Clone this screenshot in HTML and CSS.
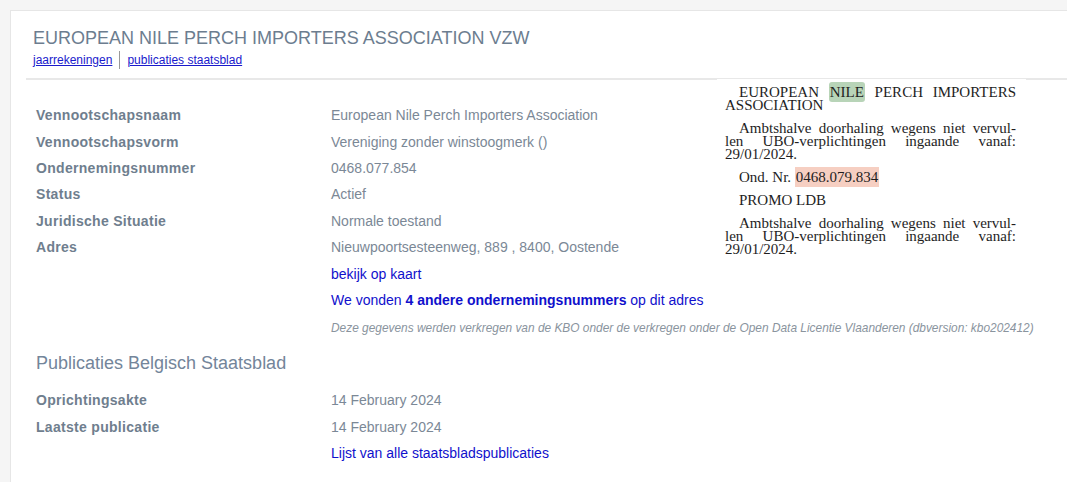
FILE: index.html
```html
<!DOCTYPE html>
<html lang="nl">
<head>
  <meta charset="UTF-8" />
  <meta name="viewport" content="width=device-width, initial-scale=1.0"/>
  <title>European Nile Perch Importers Association VZW</title>
  <link rel="stylesheet" href="styles.css">
</head>
<body>

  <div class="card">
    <div class="card-header">
      <h1>EUROPEAN NILE PERCH IMPORTERS ASSOCIATION VZW</h1>
      <div class="sublinks">
        <a href="#">jaarrekeningen</a>
        <span class="sep"></span>
        <a href="#">publicaties staatsblad</a>
      </div>
    </div>

    <div class="card-body">
      <table class="info">
        <tr><th>Vennootschapsnaam</th><td>European Nile Perch Importers Association</td></tr>
        <tr><th>Vennootschapsvorm</th><td>Vereniging zonder winstoogmerk ()</td></tr>
        <tr><th>Ondernemingsnummer</th><td>0468.077.854</td></tr>
        <tr><th>Status</th><td>Actief</td></tr>
        <tr><th>Juridische Situatie</th><td>Normale toestand</td></tr>
        <tr><th>Adres</th><td>Nieuwpoortsesteenweg, 889 , 8400, Oostende</td></tr>
        <tr><th></th><td><a class="link" href="#">bekijk op kaart</a></td></tr>
        <tr><th></th><td><a class="link" href="#">We vonden <b>4 andere ondernemingsnummers</b> op dit adres</a></td></tr>
        <tr><th></th><td class="note">Deze gegevens werden verkregen van de KBO onder de verkregen onder de Open Data Licentie Vlaanderen (dbversion: kbo202412)</td></tr>
      </table>

      <h2>Publicaties Belgisch Staatsblad</h2>
      <table class="info">
        <tr><th>Oprichtingsakte</th><td>14 February 2024</td></tr>
        <tr><th>Laatste publicatie</th><td>14 February 2024</td></tr>
        <tr><th></th><td><a class="link" href="#">Lijst van alle staatsbladspublicaties</a></td></tr>
      </table>
    </div>

    <div class="clipping">
      <p>EUROPEAN <mark class="hl-name">NILE</mark> PERCH IMPORTERS ASSOCIATION</p>
      <p>Ambtshalve doorhaling wegens niet vervul-len UBO-verplichtingen ingaande vanaf: 29/01/2024.</p>
      <p>Ond. Nr. <mark class="hl-nr">0468.079.834</mark></p>
      <p>PROMO LDB</p>
      <p>Ambtshalve doorhaling wegens niet vervul-len UBO-verplichtingen ingaande vanaf: 29/01/2024.</p>
    </div>
  </div>

</body>
</html>
```

FILE: styles.css
```css
body {
  margin: 0;
  padding: 10px 0 0 10px;
  background-color: #f5f5f5;
  font-family: "Liberation Sans", Arial, sans-serif;
  color: #7b8896;
}

.card {
  position: relative;
  background-color: #fff;
  border: 1px solid #e6e6e6;
  border-right: none;
  min-height: 480px;
}

.card-header {
  margin: 0 0 0 15px;
  padding: 16px 0 9px 7px;
  border-bottom: 2px solid #e8e8e8;
}

h1 {
  margin: 0;
  font-size: 18px;
  font-weight: normal;
  color: #6c7d8f;
  line-height: 22px;
}

.sublinks {
  display: flex;
  align-items: center;
  gap: 7px;
  margin-top: 2px;
  font-size: 12px;
  line-height: 16px;
}

.sublinks a {
  color: #1a1acc;
}

.sep {
  width: 1px;
  height: 18px;
  background-color: #999;
}

.card-body {
  padding: 22px 0 0 25px;
}

.info {
  border-collapse: collapse;
  font-size: 14px;
}

.info th {
  width: 295px;
  padding: 0;
  height: 26.4px;
  text-align: left;
  vertical-align: middle;
  color: #6f7e8e;
  font-weight: bold;
  letter-spacing: 0.3px;
}

.info td {
  padding: 0;
  height: 26.4px;
  vertical-align: middle;
  color: #7b8896;
}

.link {
  color: #1010cc;
  text-decoration: none;
}

.info td.note {
  font-size: 11.9px;
  font-style: italic;
  color: #8a949e;
  height: 30px;
}

h2 {
  margin: 10px 0 13px;
  font-size: 18px;
  line-height: 21px;
  font-weight: normal;
  color: #73859a;
}

.clipping {
  position: absolute;
  top: 68px;
  left: 706px;
  width: 291px;
  padding: 7px 10px 8px 8px;
  background-color: #fff;
  font-family: "Liberation Serif", "Times New Roman", serif;
  font-size: 15px;
  line-height: 13px;
  color: #1e1e1e;
}

.clipping p {
  margin: 0 0 10px;
  text-align: justify;
  text-indent: 14px;
  hyphens: manual;
}

mark {
  color: inherit;
  padding: 2px 1px;
  border-radius: 3px;
}

.hl-name {
  background-color: #b8d4b8;
}

.hl-nr {
  background-color: #f6cfc2;
  border-radius: 0;
}
```
